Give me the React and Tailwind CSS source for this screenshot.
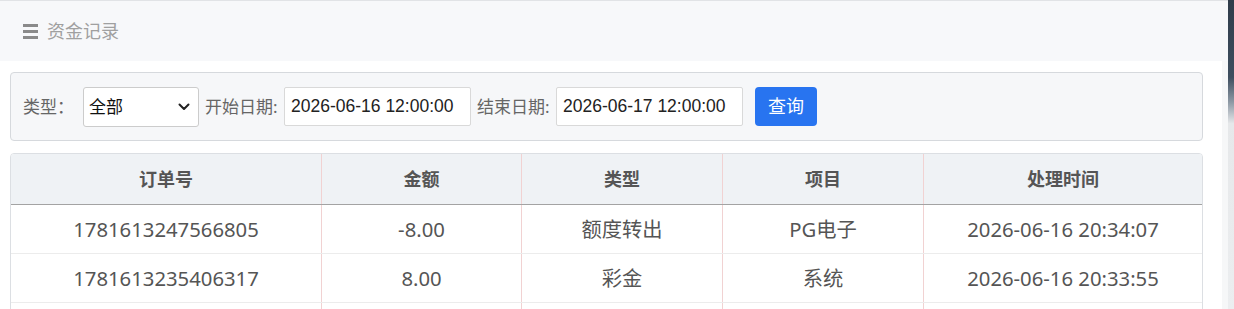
import React from "react";

const cjk = { fontFamily: '"Noto Sans", "Noto Sans CJK SC", sans-serif' };

function Chevron() {
  return (
    <svg width="12" height="8" viewBox="0 0 12 8" fill="none">
      <path d="M1.5 1.5 L6 6 L10.5 1.5" stroke="#222" strokeWidth="2" strokeLinecap="round" strokeLinejoin="round" />
    </svg>
  );
}

const rows = [
  ["1781613247566805", "-8.00", "额度转出", "PG电子", "2026-06-16 20:34:07"],
  ["1781613235406317", "8.00", "彩金", "系统", "2026-06-16 20:33:55"],
  ["", "", "", "", ""],
];

const heads = ["订单号", "金额", "类型", "项目", "处理时间"];

export default function App() {
  return (
    <div className="w-[1234px] h-[309px] flex overflow-hidden bg-white" style={cjk}>
      <div className="w-[1228px] flex flex-col">
        <div className="h-[1px] shrink-0 bg-[#e1e3e6]" />
        <div className="h-[60px] shrink-0 bg-[#f7f8fa] flex items-center pl-[23px] gap-[9px]">
          <div className="flex flex-col gap-[3px] w-[15px]">
            <div className="h-[3px] bg-[#8a8a8a]" />
            <div className="h-[3px] bg-[#8a8a8a]" />
            <div className="h-[3px] bg-[#8a8a8a]" />
          </div>
          <span className="text-[18px] text-[#a0a0a0] leading-none">资金记录</span>
        </div>
        <div className="flex flex-1 min-h-0">
          <div className="w-[1222px] bg-white pl-[10px] pr-[19px] pt-[11px] flex flex-col gap-[12px]">
            <div className="h-[69px] shrink-0 border border-[#d6d9dd] rounded-[4px] bg-[#f6f7f9] flex items-center pl-[12px] text-[17px] text-[#666]">
              <span className="w-[60px]">类型：</span>
              <div className="w-[116px] h-[40px] bg-white border border-[#cccccc] rounded-[3px] flex items-center justify-between pl-[5px] pr-[8px] text-[#111]">
                <span>全部</span>
                <Chevron />
              </div>
              <span className="ml-[6px] w-[79px] whitespace-nowrap">开始日期:</span>
              <div className="w-[187px] h-[39px] bg-white border border-[#d9d9d9] rounded-[2px] flex items-center pl-[6px] text-[17.5px] text-[#222]" style={{ fontFamily: '"Liberation Sans", Arial, sans-serif' }}>
                2026-06-16 12:00:00
              </div>
              <span className="ml-[6px] w-[79px] whitespace-nowrap">结束日期:</span>
              <div className="w-[187px] h-[39px] bg-white border border-[#d9d9d9] rounded-[2px] flex items-center pl-[6px] text-[17.5px] text-[#222]" style={{ fontFamily: '"Liberation Sans", Arial, sans-serif' }}>
                2026-06-17 12:00:00
              </div>
              <button className="ml-[12px] w-[62px] h-[39px] bg-[#2874f0] rounded-[4px] text-white text-[18px] flex items-center justify-center">
                查询
              </button>
            </div>
            <div className="shrink-0 border border-[#dcdfe3] rounded-t-[4px] overflow-hidden">
              <div className="grid grid-cols-[311px_200px_201px_201px_1fr] h-[51px] bg-[#eff2f5] border-b border-[#a3a3a3]">
                {heads.map((h, i) => (
                  <div key={i} className={`flex items-center justify-center font-bold text-[18px] text-[#555] ${i < 4 ? "border-r border-[#f1d2d2]" : ""}`}>
                    {h}
                  </div>
                ))}
              </div>
              {rows.map((r, ri) => (
                <div key={ri} className="grid grid-cols-[311px_200px_201px_201px_1fr] h-[49px] border-b border-[#ececec]">
                  {r.map((c, i) => (
                    <div key={i} className={`flex items-center justify-center text-[20.3px] text-[#555] ${i < 4 ? "border-r border-[#f1d2d2]" : ""}`}>
                      {c}
                    </div>
                  ))}
                </div>
              ))}
            </div>
          </div>
          <div className="flex-1 bg-[#f6f7f8]" />
        </div>
      </div>
      <div className="w-[6px] shrink-0 bg-[linear-gradient(to_bottom,#2f3c4a_0%,#3e4e5f_25%,#8c98a4_33%,#e6e8ea_40%,#eceef0_100%)]" />
    </div>
  );
}
